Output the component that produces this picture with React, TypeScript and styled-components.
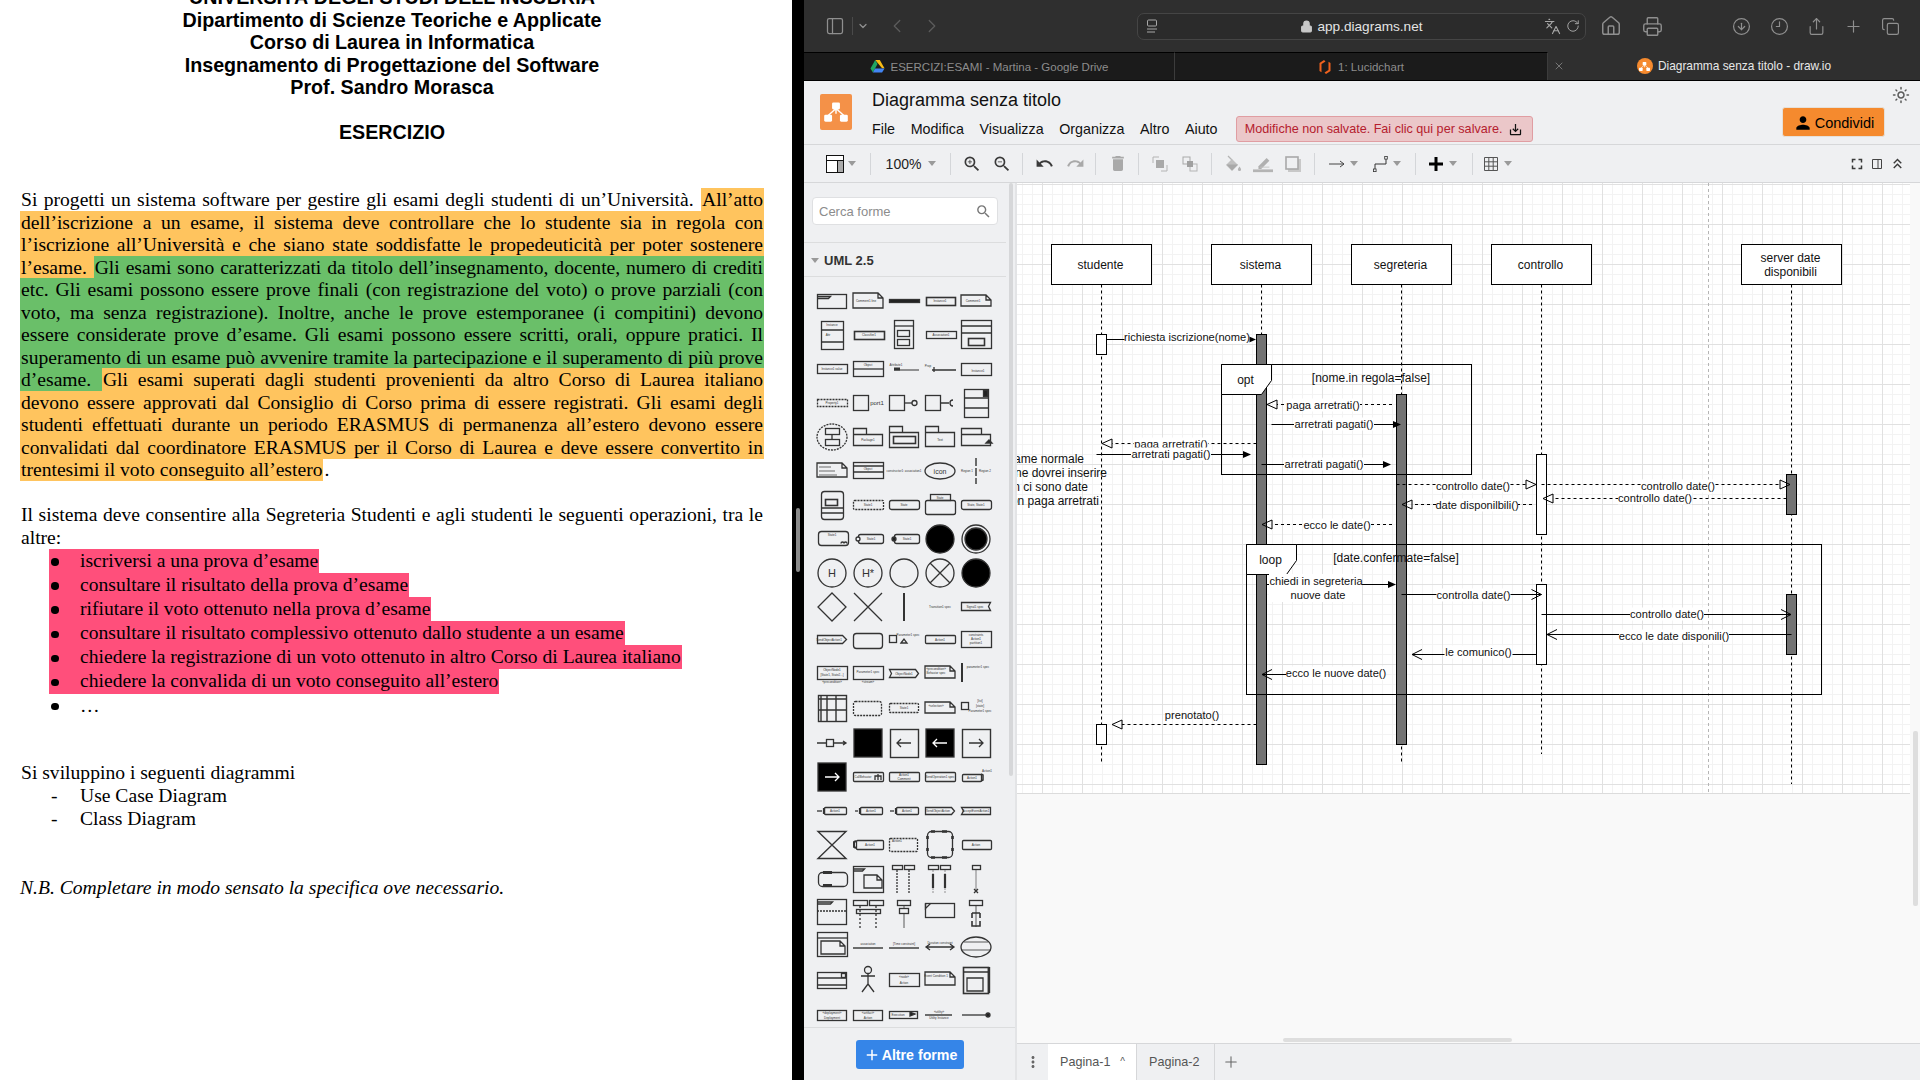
import React from "react";
import styled, { createGlobalStyle } from "styled-components";
import {
	ChevronDown,
	ChevronLeft,
	ChevronRight,
	CircleArrowDown,
	Clock9,
	Copy,
	House,
	Languages,
	Lock,
	PanelLeft,
	Plus,
	Printer,
	RotateCw,
	Share,
	X,
} from "lucide-react";
import {
	MdAdd,
	MdDelete,
	MdFullscreen,
	MdKeyboardDoubleArrowUp,
	MdMoreVert,
	MdOutlineLightMode,
	MdOutlineSaveAlt,
	MdPerson,
	MdRedo,
	MdSearch,
	MdUndo,
	MdZoomIn,
	MdZoomOut,
} from "react-icons/md";

const GlobalStyle = createGlobalStyle`
	html, body {
		margin: 0;
		padding: 0;
		background: #000;
	}
	* {
		box-sizing: border-box;
	}
`;

const Page = styled.div`
	display: flex;
	width: 1920px;
	height: 1080px;
	overflow: hidden;
	font-family: "Liberation Sans", Arial, sans-serif;
`;

/* ---------- PDF on the left ---------- */

const Doc = styled.div`
	width: 792px;
	height: 1080px;
	flex: none;
	overflow: hidden;
	background: #fff;
	color: #000;
	padding: 0 28px 0 20px;
	font-family: "Liberation Serif", "Times New Roman", serif;
	font-size: 19.6px;
	line-height: 22.5px;
`;

const DocHead = styled.header`
	margin-top: -14px;
	text-align: center;
	font-family: "Liberation Sans", Arial, sans-serif;
	font-weight: bold;
	font-size: 19.7px;
`;

const DocExercise = styled.div`
	margin-top: 22.5px;
`;

const Paragraph = styled.section<{ $top: number }>`
	margin-top: ${(p) => p.$top}px;
`;

const Line = styled.div<{ $last?: boolean }>`
	text-align: justify;
	text-align-last: ${(p) => (p.$last ? "left" : "justify")};
	white-space: nowrap;
`;

const TONES: Record<string, string> = {
	o: "#ffc45e",
	g: "#6abf69",
	p: "#ff4f7b",
	n: "transparent",
};

const Mark = styled.span<{ $tone: string }>`
	background: ${(p) => TONES[p.$tone]};
	padding: 1px;
`;

const Bullets = styled.ul`
	list-style: none;
	margin: 0 0 0 29px;
	padding: 0;
	line-height: 24.1px;
`;

const BulletRow = styled.li<{ $tone: string }>`
	display: flex;
	width: fit-content;
	background: ${(p) => TONES[p.$tone]};
	padding-right: 1px;
`;

const BulletMark = styled.span`
	width: 31px;
	flex: none;
	display: flex;
	align-items: center;
	padding: 2px 0 0 2px;
	&::before {
		content: "";
		width: 7.5px;
		height: 7.5px;
		border-radius: 50%;
		background: #000;
	}
`;

const DashList = styled.ul`
	list-style: none;
	margin: 1px 0 0 31px;
	padding: 0;
`;

const DashRow = styled.li`
	display: flex;
`;

const DashMark = styled.span`
	width: 29px;
`;

const ItalicLine = styled.div`
	margin-top: 47px;
	font-style: italic;
`;

const Gutter = styled.div`
	position: relative;
	width: 12px;
	flex: none;
	background: #000;
`;

const GutterHandle = styled.div`
	position: absolute;
	left: 4px;
	top: 508px;
	width: 4px;
	height: 64px;
	border-radius: 2px;
	background: #8a8a8a;
`;

const PARAGRAPH_ONE: [string, string][][] = [
	[["n", "Si progetti un sistema software per gestire gli esami degli studenti di un’Università. "], ["o", "All’atto"]],
	[["o", "dell’iscrizione a un esame, il sistema deve controllare che lo studente sia in regola con"]],
	[["o", "l’iscrizione all’Università e che siano state soddisfatte le propedeuticità per poter sostenere"]],
	[["o", "l’esame. "], ["g", "Gli esami sono caratterizzati da titolo dell’insegnamento, docente, numero di crediti"]],
	[["g", "etc. Gli esami possono essere prove finali (con registrazione del voto) o prove parziali (con"]],
	[["g", "voto, ma senza registrazione). Inoltre, anche le prove estemporanee (i compitini) devono"]],
	[["g", "essere considerate prove d’esame. Gli esami possono essere scritti, orali, oppure pratici. Il"]],
	[["g", "superamento di un esame può avvenire tramite la partecipazione e il superamento di più prove"]],
	[["g", "d’esame. "], ["o", "Gli esami superati dagli studenti provenienti da altro Corso di Laurea italiano"]],
	[["o", "devono essere approvati dal Consiglio di Corso prima di essere registrati. Gli esami degli"]],
	[["o", "studenti effettuati durante un periodo ERASMUS di permanenza all’estero devono essere"]],
	[["o", "convalidati dal coordinatore ERASMUS per il Corso di Laurea e deve essere convertito in"]],
	[["o", "trentesimi il voto conseguito all’estero"], ["n", "."]],
];

const OPERATIONS = [
	"iscriversi a una prova d’esame",
	"consultare il risultato della prova d’esame",
	"rifiutare il voto ottenuto nella prova d’esame",
	"consultare il risultato complessivo ottenuto dallo studente a un esame",
	"chiedere la registrazione di un voto ottenuto in altro Corso di Laurea italiano",
	"chiedere la convalida di un voto conseguito all’estero",
];

function Document() {
	return (
		<Doc>
			<DocHead>
				<div>UNIVERSITÀ DEGLI STUDI DELL’INSUBRIA</div>
				<div>Dipartimento di Scienze Teoriche e Applicate</div>
				<div>Corso di Laurea in Informatica</div>
				<div>Insegnamento di Progettazione del Software</div>
				<div>Prof. Sandro Morasca</div>
				<DocExercise>ESERCIZIO</DocExercise>
			</DocHead>
			<Paragraph $top={45.5}>
				{PARAGRAPH_ONE.map((segments, i) => (
					<Line key={i} $last={i === PARAGRAPH_ONE.length - 1}>
						{segments.map(([tone, text], j) => (
							<Mark key={j} $tone={tone}>
								{text}
							</Mark>
						))}
					</Line>
				))}
			</Paragraph>
			<Paragraph $top={22.5}>
				<Line>
					<Mark $tone="n">Il sistema deve consentire alla Segreteria Studenti e agli studenti le seguenti operazioni, tra le</Mark>
				</Line>
				<Line $last>
					<Mark $tone="n">altre:</Mark>
				</Line>
			</Paragraph>
			<Bullets>
				{OPERATIONS.map((text) => (
					<BulletRow key={text} $tone="p">
						<BulletMark />
						{text}
					</BulletRow>
				))}
				<BulletRow $tone="n">
					<BulletMark />…
				</BulletRow>
			</Bullets>
			<Paragraph $top={44}>
				<Line $last>
					<Mark $tone="n">Si sviluppino i seguenti diagrammi</Mark>
				</Line>
				<DashList>
					<DashRow>
						<DashMark>-</DashMark>Use Case Diagram
					</DashRow>
					<DashRow>
						<DashMark>-</DashMark>Class Diagram
					</DashRow>
				</DashList>
			</Paragraph>
			<ItalicLine>N.B. Completare in modo sensato la specifica ove necessario.</ItalicLine>
		</Doc>
	);
}

/* ---------- Safari chrome ---------- */

const Browser = styled.div`
	flex: 1;
	min-width: 0;
	height: 1080px;
	display: flex;
	flex-direction: column;
	background: #eff0f2;
`;

const ChromeBar = styled.div`
	height: 52px;
	flex: none;
	display: flex;
	align-items: center;
	padding-left: 21px;
	background: #2f2f2f;
`;

const ChromeSlot = styled.div<{ $w: number; $dim?: boolean }>`
	width: ${(p) => p.$w}px;
	flex: none;
	display: flex;
	justify-content: center;
	color: ${(p) => (p.$dim ? "#5c5c5c" : "#8f8f8f")};
`;

const ChromeDivider = styled.div`
	width: 1px;
	height: 18px;
	flex: none;
	margin-left: 7px;
	background: #4a4a4a;
`;

const AddressBar = styled.div`
	width: 449px;
	height: 27px;
	flex: none;
	margin-left: 194px;
	margin-right: 5px;
	display: flex;
	align-items: center;
	border: 1px solid #454545;
	border-radius: 7px;
	background: #2b2b2b;
	color: #e4e4e4;
	font-size: 13.6px;
`;

const ReaderIcon = styled.svg`
	margin-left: 8px;
	flex: none;
`;

const AddressText = styled.div`
	flex: 1;
	display: flex;
	justify-content: center;
	align-items: center;
	gap: 4px;
	padding-left: 21px;
`;

const AddressTools = styled.div`
	display: flex;
	align-items: center;
	gap: 5px;
	padding-right: 5px;
	color: #a8a8a8;
`;

const ChromeSpacer = styled.div<{ $w: number }>`
	width: ${(p) => p.$w}px;
	flex: none;
`;

const TabBar = styled.div`
	height: 29px;
	flex: none;
	display: flex;
	border-bottom: 1px solid #000;
	font-size: 11.5px;
`;

const InactiveTab = styled.div<{ $w: number }>`
	width: ${(p) => p.$w}px;
	flex: none;
	display: flex;
	align-items: center;
	justify-content: center;
	gap: 6px;
	background: #1b1b1b;
	border-top: 1px solid #000;
	border-right: 1px solid #3c3c3c;
	color: #8d8d8d;
`;

const ActiveTab = styled.div`
	flex: 1;
	display: grid;
	grid-template-columns: 22px 1fr 22px;
	align-items: center;
	background: #2f2f2f;
	color: #e8e8e8;
	font-size: 11.9px;
`;

const TabClose = styled.div`
	display: flex;
	justify-content: center;
	color: #777;
`;

const ActiveLabel = styled.div`
	display: flex;
	justify-content: center;
	align-items: center;
	gap: 5px;
`;

function DriveIcon() {
	return (
		<svg width="15" height="13" viewBox="0 0 14 13">
			<polygon points="4.7,0 9.3,0 14,8.2 11.6,8.2" fill="#f9bc15" />
			<polygon points="4.7,0 7,4 2.4,12.6 0,8.4" fill="#1fa463" />
			<polygon points="4.6,8.4 14,8.4 11.6,12.6 2.4,12.6" fill="#4285f4" />
		</svg>
	);
}

function LucidIcon() {
	return (
		<svg width="14" height="16" viewBox="0 0 14 16">
			<path d="M6 1 1.5 4v8l2 1.3V5l4-2.6z" fill="#f0621e" />
			<path d="M8 15l4.5-3V4l-2-1.3V11l-4 2.6z" fill="#f0621e" />
		</svg>
	);
}

function DrawioGlyph({ size }: { size: number }) {
	return (
		<svg width={size} height={size} viewBox="0 0 32 32">
			<rect x="11.5" y="5" width="9" height="8" rx="1.5" fill="#fff" />
			<rect x="2.5" y="19" width="9" height="8" rx="1.5" fill="#fff" />
			<rect x="20.5" y="19" width="9" height="8" rx="1.5" fill="#fff" />
			<path d="M16 12v6M16 12 7 20M16 12l9 8" stroke="#fff" strokeWidth="1.6" fill="none" />
		</svg>
	);
}

const FaviconDisc = styled.span`
	width: 16px;
	height: 16px;
	border-radius: 50%;
	background: #f58a2e;
	display: inline-flex;
	align-items: center;
	justify-content: center;
`;

function SafariChrome() {
	return (
		<>
			<ChromeBar>
				<ChromeSlot $w={20}>
					<PanelLeft size={20} strokeWidth={1.5} />
				</ChromeSlot>
				<ChromeDivider />
				<ChromeSlot $w={20}>
					<ChevronDown size={12} strokeWidth={2.5} />
				</ChromeSlot>
				<ChromeSlot $w={48} $dim>
					<ChevronLeft size={22} strokeWidth={1.4} />
				</ChromeSlot>
				<ChromeSlot $w={22} $dim>
					<ChevronRight size={22} strokeWidth={1.4} />
				</ChromeSlot>
				<AddressBar>
					<ReaderIcon width="12" height="14" viewBox="0 0 12 14">
						<rect x="1.5" y="1" width="9" height="6" rx="1" fill="none" stroke="#a8a8a8" />
						<path d="M1 10h10M1 13h8" stroke="#a8a8a8" />
					</ReaderIcon>
					<AddressText>
						<Lock size={13} fill="#c8c8c8" color="#c8c8c8" />
						app.diagrams.net
					</AddressText>
					<AddressTools>
						<Languages size={17} strokeWidth={1.6} />
						<RotateCw size={14} strokeWidth={1.6} />
					</AddressTools>
				</AddressBar>
				<ChromeSlot $w={40}>
					<House size={22} strokeWidth={1.6} />
				</ChromeSlot>
				<ChromeSlot $w={42}>
					<Printer size={21} strokeWidth={1.6} />
				</ChromeSlot>
				<ChromeSpacer $w={48} />
				<ChromeSlot $w={40}>
					<CircleArrowDown size={19} strokeWidth={1.5} />
				</ChromeSlot>
				<ChromeSlot $w={36}>
					<Clock9 size={19} strokeWidth={1.5} />
				</ChromeSlot>
				<ChromeSlot $w={38}>
					<Share size={19} strokeWidth={1.5} />
				</ChromeSlot>
				<ChromeSlot $w={36}>
					<Plus size={19} strokeWidth={1.5} />
				</ChromeSlot>
				<ChromeSlot $w={38}>
					<Copy size={19} strokeWidth={1.5} />
				</ChromeSlot>
			</ChromeBar>
			<TabBar>
				<InactiveTab $w={371}>
					<DriveIcon />
					ESERCIZI:ESAMI - Martina - Google Drive
				</InactiveTab>
				<InactiveTab $w={373}>
					<LucidIcon />
					1: Lucidchart
				</InactiveTab>
				<ActiveTab>
					<TabClose>
						<X size={12} />
					</TabClose>
					<ActiveLabel>
						<FaviconDisc>
							<DrawioGlyph size={13} />
						</FaviconDisc>
						Diagramma senza titolo - draw.io
					</ActiveLabel>
				</ActiveTab>
			</TabBar>
		</>
	);
}

/* ---------- draw.io header and toolbar ---------- */

const AppHeader = styled.div`
	height: 64px;
	flex: none;
	display: flex;
	padding-left: 16px;
	background: #eff0f2;
	border-bottom: 1px solid #d6d7d9;
`;

const Logo = styled.div`
	width: 32px;
	height: 36px;
	flex: none;
	margin-top: 13px;
	border-radius: 2px;
	background: #f49148;
	display: flex;
	align-items: center;
	justify-content: center;
`;

const HeaderCenter = styled.div`
	margin-left: 20px;
	padding-top: 8px;
`;

const DocTitle = styled.div`
	height: 22px;
	line-height: 22px;
	font-size: 18px;
	color: #111;
`;

const MenuRow = styled.div`
	margin-top: 5px;
	display: flex;
	align-items: center;
	gap: 15.6px;
	height: 26px;
	font-size: 14.3px;
	color: #111;
`;

const UnsavedBanner = styled.div`
	height: 26px;
	width: 297px;
	margin-left: 2.5px;
	display: flex;
	align-items: center;
	justify-content: center;
	gap: 6px;
	border: 1px solid #e09da2;
	border-radius: 3px;
	background: #ebc7c9;
	color: #b5202e;
	font-size: 12.6px;
`;

const BannerIcon = styled.span`
	display: flex;
	color: #111;
`;

const HeaderRight = styled.div`
	margin-left: auto;
	padding: 5px 10px 0 0;
	display: flex;
	flex-direction: column;
	align-items: flex-end;
`;

const SunSlot = styled.div`
	height: 18px;
	color: #5a5a5a;
`;

const ShareButton = styled.div`
	margin: 3px 25px 0 0;
	width: 103px;
	height: 30px;
	display: flex;
	align-items: center;
	justify-content: center;
	gap: 2px;
	padding-top: 1px;
	border-radius: 3px;
	border: 1px solid #e6e0d8;
	background: #f58a2e;
	color: #000;
	font-size: 14.5px;
`;

const Toolbar = styled.div`
	height: 38px;
	flex: none;
	display: flex;
	align-items: center;
	background: #eff0f2;
	border-bottom: 1px solid #d6d7d9;
`;

const ToolGroup = styled.div<{ $w?: number; $pad: number; $gap?: number }>`
	width: ${(p) => (p.$w ? `${p.$w}px` : "auto")};
	height: 22px;
	flex: none;
	display: flex;
	align-items: center;
	gap: ${(p) => p.$gap || 0}px;
	padding-left: ${(p) => p.$pad}px;
	border-right: ${(p) => (p.$w ? "1px solid #d4d6d9" : "0")};
`;

const ToolPair = styled.div`
	display: flex;
	align-items: center;
`;

const Tool = styled.div<{ $w?: number; $dim?: boolean }>`
	width: ${(p) => p.$w || 20}px;
	flex: none;
	display: flex;
	align-items: center;
	justify-content: center;
	color: ${(p) => (p.$dim ? "#a9a9a9" : "#3a3a3a")};
`;

const ZoomLabel = styled.div`
	width: 37px;
	text-align: center;
	font-size: 14px;
	color: #222;
`;

const Caret = styled.div`
	width: 0;
	height: 0;
	border-left: 4px solid transparent;
	border-right: 4px solid transparent;
	border-top: 5px solid #9a9a9a;
`;

const ToolbarRight = styled.div`
	margin-left: auto;
	padding-right: 13px;
	display: flex;
`;

function Caretted({ w = 14 }: { w?: number }) {
	return (
		<Tool $w={w}>
			<Caret />
		</Tool>
	);
}

function AppToolbar() {
	return (
		<Toolbar>
			<ToolGroup $w={67} $pad={22}>
				<Tool $w={18}>
					<svg width="18" height="18" viewBox="0 0 18 18">
						<rect x="0.5" y="0.5" width="17" height="17" fill="#fff" stroke="#111" />
						<path d="M0.5 5.5h17M11.5 5.5v12" stroke="#111" fill="none" />
						<rect x="12" y="6" width="5" height="11" fill="#aaa" />
					</svg>
				</Tool>
				<Caretted w={16} />
			</ToolGroup>
			<ToolGroup $w={80} $pad={14}>
				<ZoomLabel>100%</ZoomLabel>
				<Caretted w={20} />
			</ToolGroup>
			<ToolGroup $w={72} $pad={11} $gap={10}>
				<Tool>
					<MdZoomIn size={20} />
				</Tool>
				<Tool>
					<MdZoomOut size={20} />
				</Tool>
			</ToolGroup>
			<ToolGroup $w={73} $pad={11} $gap={11}>
				<Tool>
					<MdUndo size={19} />
				</Tool>
				<Tool $dim>
					<MdRedo size={19} />
				</Tool>
			</ToolGroup>
			<ToolGroup $w={43} $pad={12}>
				<Tool $dim>
					<MdDelete size={21} />
				</Tool>
			</ToolGroup>
			<ToolGroup $w={73} $pad={11} $gap={10}>
				<Tool $dim>
					<svg width="16" height="16" viewBox="0 0 16 16">
						<path d="M1 7V1h6M15 9v6H9" fill="none" stroke="#b4b4b4" />
						<rect x="4" y="4" width="8" height="8" fill="#a9a9a9" />
					</svg>
				</Tool>
				<Tool $dim>
					<svg width="16" height="16" viewBox="0 0 16 16">
						<rect x="1" y="1" width="7" height="7" fill="none" stroke="#a9a9a9" />
						<rect x="8" y="8" width="7" height="7" fill="none" stroke="#b4b4b4" />
						<rect x="5" y="5" width="6" height="6" fill="#a0a0a0" />
					</svg>
				</Tool>
			</ToolGroup>
			<ToolGroup $w={103} $pad={11} $gap={10}>
				<Tool $dim>
					<svg width="18" height="18" viewBox="0 0 18 18">
						<path d="M4 1l4 4" stroke="#b4b4b4" strokeWidth="1.2" />
						<path d="M8 4l6 6-6 6-6-6z" fill="#c0c0c0" />
						<path d="M2.5 9.5h11.5L8 15.5z" fill="#a9a9a9" />
						<path d="M15.5 11.5c1 1.4 1.6 2.2 1.6 3a1.6 1.6 0 0 1-3.2 0c0-.8.6-1.6 1.6-3z" fill="#b4b4b4" />
					</svg>
				</Tool>
				<Tool $dim>
					<svg width="22" height="19" viewBox="0 0 22 19">
						<path d="M6 12.5 15 3.5l3 3-9 9H6z" fill="#b0b0b0" />
						<path d="M8 13.5h10" stroke="#c4c4c4" />
						<rect x="0" y="16" width="22" height="3" fill="#b4b4b4" />
					</svg>
				</Tool>
				<Tool $dim>
					<svg width="16" height="16" viewBox="0 0 16 16">
						<rect x="3" y="3" width="13" height="13" fill="#c8c8c8" />
						<rect x="1" y="1" width="12" height="12" fill="#eff0f2" stroke="#a9a9a9" strokeWidth="1.6" />
					</svg>
				</Tool>
			</ToolGroup>
			<ToolGroup $w={101} $pad={12} $gap={9}>
				<ToolPair>
					<Tool>
						<svg width="16" height="8" viewBox="0 0 16 8">
							<path d="M0 4h15M11 1l4 3-4 3" fill="none" stroke="#444" />
						</svg>
					</Tool>
					<Caretted />
				</ToolPair>
				<ToolPair>
					<Tool>
						<svg width="15" height="16" viewBox="0 0 15 16">
							<path d="M2 13V8h11V3" fill="none" stroke="#333" />
							<rect x="0.5" y="13" width="2.6" height="2.6" fill="#eff0f2" stroke="#333" strokeWidth="0.8" />
							<rect x="11.7" y="0.5" width="2.6" height="2.6" fill="#eff0f2" stroke="#333" strokeWidth="0.8" />
						</svg>
					</Tool>
					<Caretted />
				</ToolPair>
			</ToolGroup>
			<ToolGroup $w={57} $pad={10}>
				<Tool>
					<svg width="14" height="14" viewBox="0 0 14 14">
						<path d="M7 0v14M0 7h14" stroke="#000" strokeWidth="3" />
					</svg>
				</Tool>
				<Caretted />
			</ToolGroup>
			<ToolGroup $pad={8}>
				<Tool>
					<svg width="14" height="14" viewBox="0 0 14 14">
						<path d="M.5.5h13v13H.5zM.5 4.8h13M.5 9.2h13M4.8.5v13M9.2.5v13" fill="none" stroke="#555" />
					</svg>
				</Tool>
				<Caretted />
			</ToolGroup>
			<ToolbarRight>
				<Tool>
					<MdFullscreen size={18} />
				</Tool>
				<Tool>
					<svg width="12" height="12" viewBox="0 0 12 12">
						<path d="M1.5 1.5h9v9h-9zM7 1.5v9" fill="none" stroke="#444" />
					</svg>
				</Tool>
				<Tool>
					<MdKeyboardDoubleArrowUp size={17} />
				</Tool>
			</ToolbarRight>
		</Toolbar>
	);
}

/* ---------- shape palette ---------- */

const Body = styled.div`
	flex: 1;
	min-height: 0;
	display: flex;
`;

const Sidebar = styled.aside`
	position: relative;
	width: 213px;
	flex: none;
	display: flex;
	flex-direction: column;
	background: #eff0f2;
	border-right: 2px solid #e3e4e6;
`;

const SideThumb = styled.div`
	position: absolute;
	left: 205px;
	top: 0;
	width: 4px;
	height: 593px;
	border-radius: 2px;
	background: #d6d7d9;
`;

const SearchBox = styled.div`
	margin: 14px 0 17px 8px;
	width: 186px;
	height: 28px;
	flex: none;
	display: flex;
	align-items: center;
	justify-content: space-between;
	padding: 0 5px 0 6px;
	border: 1px solid #dfe0e2;
	border-radius: 4px;
	background: #fff;
	color: #8c8c8c;
	font-size: 13px;
`;

const SectionHead = styled.div`
	width: 202px;
	height: 35px;
	flex: none;
	display: flex;
	align-items: center;
	gap: 5px;
	padding: 1px 0 0 7px;
	border-top: 1px solid #dcddde;
	border-bottom: 1px solid #dcddde;
	font-size: 13px;
	font-weight: bold;
	color: #333;
`;

const SmallCaret = styled.div`
	width: 0;
	height: 0;
	border-left: 4px solid transparent;
	border-right: 4px solid transparent;
	border-top: 5px solid #999;
`;

const PaletteScroll = styled.div`
	flex: 1;
	min-height: 0;
	overflow: hidden;
	padding: 7px 0 0 10px;
`;

const PaletteGrid = styled.div`
	display: grid;
	grid-template-columns: repeat(5, 36px);
	grid-auto-rows: 34px;
`;

const Cell = styled.svg`
	width: 36px;
	height: 34px;
	fill: none;
	stroke: #333;
	stroke-width: 1.3;
`;

const Tiny = styled.text<{ $size?: number }>`
	font-family: "Liberation Sans", Arial, sans-serif;
	font-size: ${(p) => p.$size || 3}px;
	fill: #333;
	stroke: none;
	text-anchor: middle;
`;

const SideFooter = styled.div`
	height: 53px;
	flex: none;
	display: flex;
	align-items: center;
	justify-content: center;
	padding: 0 0 0 1px;
	border-top: 1px solid #dcddde;
`;

const MoreShapes = styled.div`
	width: 108px;
	height: 29px;
	display: flex;
	align-items: center;
	justify-content: center;
	gap: 1px;
	padding-top: 1px;
	border-radius: 3px;
	background: #3585e8;
	color: #fff;
	font-size: 14.2px;
	font-weight: bold;
`;

const note = (x: number, y: number, w: number, h: number) =>
	`M${x} ${y}h${w - 5}l5 5v${h - 5}h-${w}zM${x + w - 5} ${y}v5h5`;

const Box = (p: { x: number; y: number; w: number; h: number; r?: number; f?: string; d?: boolean; s?: number }) => (
	<rect
		x={p.x + 0.5}
		y={p.y + 0.5}
		width={p.w}
		height={p.h}
		rx={p.r || 0}
		fill={p.f || "none"}
		strokeDasharray={p.d ? "2 1" : undefined}
		strokeWidth={p.s}
	/>
);

const Lc = (p: { d: string; f?: string; s?: number; da?: string }) => (
	<path d={p.d} fill={p.f || "none"} strokeWidth={p.s} strokeDasharray={p.da} />
);

const Ci = (p: { y?: number; r?: number; f?: string }) => <circle cx={18} cy={p.y || 17} r={p.r || 14} fill={p.f || "none"} />;

const PALETTE: React.ReactNode[] = [
	/* row 1 */
	<><Box x={3} y={10} w={29} h={14} /><Lc d="M3.5 12.5h13l-2 2H3.5" /></>,
	<><Lc d={note(3, 9, 30, 15)} /><Tiny x={16} y={18}>Comment1 line</Tiny></>,
	<Box x={3} y={15} w={30} h={3} f="#222" />,
	<><Box x={4} y={13} w={29} h={8} s={1.6} /><Tiny x={18} y={18}>Instance1</Tiny></>,
	<><Lc d={note(3, 11, 30, 11)} /><Tiny x={15} y={18}>Comment1</Tiny></>,
	/* row 2 */
	<><Box x={7} y={3} w={22} h={28} /><Lc d="M7 12h22M7 24h22" /><Tiny x={18} y={8}>Instance</Tiny><Tiny x={14} y={18}>Attr</Tiny></>,
	<><Box x={4} y={13} w={30} h={8} s={1.6} /><Tiny x={19} y={18}>Classifier1</Tiny></>,
	<><Box x={8} y={2} w={19} h={28} /><Box x={11} y={12} w={12} h={6} /><Box x={11} y={21} w={12} h={6} /><Lc d="M8 8h19" /></>,
	<><Box x={4} y={13} w={30} h={7} /><Tiny x={19} y={18}>Association1</Tiny></>,
	<><Box x={3} y={2} w={30} h={28} /><Lc d="M3 8h30M3 15h30" /><Box x={10} y={20} w={16} h={7} s={1.6} /></>,
	/* row 3 */
	<><Box x={3} y={12} w={30} h={9} /><Tiny x={18} y={18}>Instance1 value</Tiny></>,
	<><Box x={3} y={9} w={30} h={15} /><Lc d="M3 17h30" /><Tiny x={18} y={14}>Object</Tiny></>,
	<><Lc d="M8 18h25" s={1} /><Lc d="M8 17h6" s={3} /><Tiny x={10} y={14}>Attribute1</Tiny></>,
	<><Lc d="M10 18h24M12 15v5" /><Tiny x={6} y={15}>Prop</Tiny></>,
	<><Box x={3} y={11} w={30} h={12} /><Tiny x={20} y={20}>Instance1</Tiny></>,
	/* row 4 */
	<><Box x={3} y={13} w={30} h={7} d /><Tiny x={18} y={18}>Property1</Tiny></>,
	<><Box x={3} y={9} w={15} h={15} /><Tiny x={27} y={19} $size={6}>port1</Tiny></>,
	<><Box x={3} y={9} w={15} h={15} /><Lc d="M18 17h8" /><circle cx={28.5} cy={17} r={2.5} /></>,
	<><Box x={3} y={9} w={15} h={15} /><Lc d="M18 17h9M31 14a3 3 0 0 0 0 6" /></>,
	<><Box x={6} y={3} w={24} h={28} /><Lc d="M6 12h24M6 22h24" /><Box x={25} y={4} w={4} h={6} f="#222" /></>,
	/* row 5 */
	<><ellipse cx={18} cy={17} rx={15} ry={13} strokeDasharray="2 1" /><Box x={11} y={8} w={14} h={6} /><Box x={11} y={19} w={14} h={6} /><Lc d="M18 14v5" /></>,
	<><Lc d="M3.5 8.5h13v6h16v11h-29z M3.5 14.5h13" /><Tiny x={18} y={21}>Package1</Tiny></>,
	<><Lc d="M3.5 6.5h13v6h16v15h-29z M3.5 12.5h29" /><Box x={7} y={16} w={22} h={7} s={1.6} /></>,
	<><Lc d="M3.5 6.5h13v6h16v14h-29z M3.5 12.5h13" /><Tiny x={18} y={21}>Text</Tiny></>,
	<><Lc d="M3.5 8.5h20v6h9v11h-29z M3.5 14.5h20" /><Lc d="M28 23l3-3 3 3z" f="#222" /></>,
	/* row 6 */
	<><Lc d={note(3, 9, 30, 14)} /><Lc d="M5 13h12M5 17h16M5 21h18" s={0.7} /></>,
	<><Box x={3} y={8} w={30} h={16} /><Lc d="M3 12h30M3 18h30" /><Tiny x={18} y={16}>Object</Tiny></>,
	<Tiny x={18} y={18}>constructor1: association1</Tiny>,
	<><ellipse cx={18} cy={17} rx={15} ry={8} /><Tiny x={18} y={20} $size={7}>icon</Tiny></>,
	<><Lc d="M18 4v8M18 14v8M18 24v6" s={1.4} /><Tiny x={9} y={18}>Region 1</Tiny><Tiny x={27} y={18}>Region 2</Tiny></>,
	/* row 7 */
	<><Box x={7} y={3} w={22} h={28} r={3} /><Box x={11} y={11} w={12} h={6} s={1.6} /><Lc d="M7 20h22M7 25h22" /></>,
	<><Box x={3} y={12} w={30} h={9} r={1} d /><Tiny x={18} y={18}>State1</Tiny></>,
	<><Box x={3} y={12} w={30} h={9} r={2} /><Tiny x={18} y={18}>State</Tiny></>,
	<><Box x={3} y={12} w={30} h={14} r={2} /><Box x={8} y={6} w={20} h={6} /><Tiny x={18} y={11}>State</Tiny></>,
	<><Box x={3} y={12} w={30} h={9} r={2} /><Tiny x={18} y={18}>State, State1</Tiny></>,
	/* row 8 */
	<><Box x={4} y={9} w={30} h={14} r={3} /><Lc d="M27 21.5a1.5 1.5 0 1 1 3 0a1.5 1.5 0 1 1 3 0" s={1.4} /><Tiny x={18} y={14}>State1</Tiny></>,
	<><Box x={8} y={12} w={25} h={9} r={2} /><circle cx={8} cy={17} r={2} fill="#eff0f2" /><Tiny x={21} y={18}>State1</Tiny></>,
	<><Box x={8} y={12} w={25} h={9} r={2} /><circle cx={8} cy={17} r={2} fill="#222" /><Tiny x={21} y={18}>State1</Tiny></>,
	<Ci f="#000" />,
	<><Ci r={14} /><Ci r={11} f="#000" /></>,
	/* row 9 */
	<><Ci /><Tiny x={18} y={21} $size={11}>H</Tiny></>,
	<><Ci /><Tiny x={18} y={21} $size={11}>H*</Tiny></>,
	<Ci />,
	<><Ci /><Lc d="M8 7l20 20M28 7 8 27" /></>,
	<Ci f="#000" />,
	/* row 10 */
	<Lc d="M18 3 32 17 18 31 4 17z" />,
	<Lc d="M4 3l28 28M32 3 4 31" />,
	<Lc d="M18 3v28" s={2} />,
	<Tiny x={18} y={18}>Transition1 spec</Tiny>,
	<><Lc d="M3.5 12.5h29l-2 4 2 4h-29z" /><Tiny x={17} y={18}>Signal1 spec</Tiny></>,
	/* row 11 */
	<><Lc d="M3.5 11.5h25l4 4-4 4h-25z" /><Tiny x={15} y={17}>SendObjectAction1</Tiny></>,
	<Box x={3} y={9} w={29} h={15} r={3} />,
	<><Box x={3} y={11} w={7} h={7} /><Lc d="M15 19l3-4 3 4z" /><Tiny x={22} y={12}>Parameter1 spec</Tiny></>,
	<><Box x={3} y={11} w={30} h={8} r={1} /><Tiny x={18} y={17}>Action1</Tiny></>,
	<><Box x={3} y={7} w={30} h={16} /><Tiny x={18} y={12}>constraints</Tiny><Tiny x={18} y={16}>Action1</Tiny><Tiny x={18} y={20}>partition1</Tiny></>,
	/* row 12 */
	<><Box x={3} y={8} w={30} h={13} /><Tiny x={18} y={13}>ObjectNode1</Tiny><Tiny x={18} y={18}>[State1, State2...]</Tiny><Tiny x={18} y={25}>{"«precondition»"}</Tiny></>,
	<><Box x={3} y={8} w={30} h={13} /><Tiny x={18} y={15}>Parameter1 spec</Tiny><Tiny x={18} y={25}>«stream»</Tiny></>,
	<><Lc d="M3.5 11.5h26l3 4-3 4h-26l2-4z" /><Tiny x={18} y={17}>ObjectNode1</Tiny></>,
	<><Lc d={note(3, 8, 30, 12)} /><Tiny x={14} y={12}>«precondition»</Tiny><Tiny x={14} y={16}>Behavior spec</Tiny></>,
	<><Lc d="M4 5v19" s={2} /><Tiny x={20} y={10}>parameter1 spec</Tiny></>,
	/* row 13 */
	<><Box x={4} y={3} w={28} h={26} s={1.4} /><Lc d="M4 7h28M4 18h28M13 3v26M22 3v26M7 3v26" s={1.4} /></>,
	<Box x={3} y={9} w={28} h={14} r={2} d />,
	<><Box x={3} y={11} w={29} h={9} r={1} d /><Tiny x={18} y={17}>State1</Tiny></>,
	<><Lc d={note(3, 10, 30, 11)} /><Tiny x={14} y={15}>«selection»</Tiny></>,
	<><Box x={3} y={10} w={7} h={7} /><Tiny x={22} y={10}>[list]</Tiny><Tiny x={22} y={15}>[state]</Tiny><Tiny x={22} y={20}>Parameter1 spec</Tiny></>,
	/* row 14 */
	<><Box x={12} y={13} w={7} h={7} /><Lc d="M3 17h9M19 17h13M29 15l3 2-3 2" /></>,
	<rect x={4} y={3} width={28} height={28} fill="#000" />,
	<><Box x={4} y={3} w={28} h={28} s={1.4} /><Lc d="M11 17h14M15 13l-4 4 4 4" /></>,
	<><rect x={4} y={3} width={28} height={28} fill="#000" /><path d="M11 17h14M15 13l-4 4 4 4" stroke="#fff" /></>,
	<><Box x={4} y={3} w={28} h={28} s={1.4} /><Lc d="M11 17h14M21 13l4 4-4 4" /></>,
	/* row 15 */
	<><rect x={4} y={3} width={28} height={28} fill="#000" /><path d="M11 17h14M21 13l4 4-4 4" stroke="#fff" /></>,
	<><Box x={3} y={12} w={30} h={9} r={1} /><Lc d="M25 20v-4h6v4M28 14v6" /><Tiny x={13} y={18}>CallBehavior</Tiny></>,
	<><Box x={3} y={12} w={30} h={9} r={1} /><Tiny x={18} y={16}>Action1</Tiny><Tiny x={18} y={20}>Comment</Tiny></>,
	<><Box x={3} y={12} w={30} h={9} r={1} /><Tiny x={18} y={18}>SendOperation1 spec</Tiny></>,
	<><Box x={4} y={14} w={19} h={7} r={1} /><Lc d="M23 14l2 1v5l-2 1" s={1.5} /><Tiny x={14} y={19}>Action1</Tiny><Tiny x={29} y={12}>Action1</Tiny></>,
	/* row 16 */
	<><Box x={10} y={13} w={22} h={7} r={1} /><Lc d="M3 17h5" /><Lc d="M10 14v6" s={2.2} /><Tiny x={21} y={18}>Action1</Tiny></>,
	<><Box x={10} y={13} w={22} h={7} r={1} /><Lc d="M5 17h3" /><Lc d="M10 14v6" s={2.2} /><Tiny x={21} y={18}>Action1</Tiny></>,
	<><Box x={10} y={13} w={22} h={7} r={1} /><Lc d="M4 17h4" /><Lc d="M10 14v6" s={2.2} /><Tiny x={21} y={18}>Action1</Tiny></>,
	<><Lc d="M3.5 13.5h26l3 3.5-3 3.5h-26z" /><Tiny x={16} y={18}>SendObjectAction</Tiny></>,
	<><Lc d="M3.5 13.5h29v7h-29l2-3.5z" /><Tiny x={18} y={18}>AcceptEventAction1</Tiny></>,
	/* row 17 */
	<Lc d="M4 3.5h28L4 30.5h28z" s={1.4} />,
	<><Box x={6} y={12} w={27} h={9} r={1} /><Lc d="M6 13l-2 1v5l2 1" s={2} /><Tiny x={20} y={18}>Action1</Tiny></>,
	<><Box x={3} y={10} w={28} h={13} r={1} d /><Tiny x={11} y={14}>Action1</Tiny></>,
	<><Box x={5} y={3} w={25} h={26} r={4} /><Lc d="M9 3.5h4M20 3.5h5M9 29.5h4M20 29.5h5M5.5 8v3M5.5 20v3M30.5 8v3M30.5 20v3" s={2.6} /></>,
	<><Box x={4} y={12} w={29} h={9} r={1} /><Tiny x={18} y={18}>Action</Tiny></>,
	/* row 18 */
	<><Box x={4} y={10} w={29} h={14} r={4} /><Lc d="M9 10.5h9M9 23.5h9" s={3} /></>,
	<><Box x={3} y={4} w={30} h={26} /><Lc d={note(14, 13, 18, 13)} /><Lc d="M3.5 7h11l-2 2h-9" /></>,
	<><Box x={6} y={3} w={10} h={4} /><Box x={18} y={3} w={10} h={4} /><Lc d="M11 8v24M23 8v24" da="2 1" /></>,
	<><Box x={6} y={3} w={10} h={4} /><Box x={18} y={3} w={10} h={4} /><Lc d="M11 12v14M23 12v14" s={2.2} /><Lc d="M11 8v24M23 8v24" s={0.5} da="2 1" /></>,
	<><Box x={14} y={3} w={8} h={4} /><Lc d="M18 8v20" s={0.6} /><Lc d="M16 27l4 4M20 27l-4 4" s={1.3} /></>,
	/* row 19 */
	<><Box x={3} y={3} w={29} h={25} /><Lc d="M3.5 6h15l-2 2h-13" /><Lc d="M3 15h29" da="2 1" s={1.5} /></>,
	<><Box x={3} y={4} w={14} h={5} /><Box x={19} y={4} w={14} h={5} /><Box x={6} y={13} w={24} h={4} /><Lc d="M10 10v22M26 10v22" da="2 2" /></>,
	<><Box x={11} y={4} w={13} h={5} /><Box x={13} y={12} w={9} h={5} /><Lc d="M18 10v2M18 17v15" s={0.8} /></>,
	<><Box x={3} y={7} w={29} h={14} /><Lc d="M3.5 7.5v5l5-5" /></>,
	<><Box x={11} y={4} w={13} h={5} /><Lc d="M18 9v22" s={0.8} /><Lc d="M14 17h8M14 17v5M22 17v5M14 25v5h8v-5" s={1.6} /></>,
	/* row 20 */
	<><Box x={3} y={2} w={30} h={24} /><Lc d="M3 8h30" /><Lc d={note(7, 11, 24, 13)} /></>,
	<><Lc d="M3 18h30" s={1.4} /><Tiny x={18} y={15}>association</Tiny></>,
	<><Lc d="M3 18h30" s={1.4} /><Tiny x={18} y={15}>[Time constraint]</Tiny></>,
	<><Lc d="M5 17h26M8 14l-4 3 4 3M28 14l4 3-4 3" /><Tiny x={18} y={14}>Duration constraint</Tiny></>,
	<><ellipse cx={18} cy={17} rx={15} ry={10} /><Lc d="M6 12h24M3 20h30" s={0.8} /></>,
	/* row 21 */
	<><Box x={3} y={8} w={29} h={16} /><Lc d="M3 14h29M3 21h29" /><Box x={27} y={9} w={4} h={4} /></>,
	<><circle cx={18} cy={6} r={3.5} /><Lc d="M18 10v10M11 12h14M18 20l-6 8M18 20l6 8" /></>,
	<><Box x={3} y={9} w={30} h={13} /><Tiny x={18} y={14}>«node»</Tiny><Tiny x={18} y={20}>Action</Tiny></>,
	<><Lc d={note(3, 8, 30, 13)} /><Tiny x={14} y={13}>Event Condition 1</Tiny></>,
	<><Box x={5} y={3} w={25} h={26} s={1.6} /><Lc d="M5.5 8h25M9 14h16v13H9z" /><Lc d="M31 3v26" s={2.4} /></>,
	/* row 22 */
	<><Box x={3} y={12} w={29} h={10} /><Tiny x={18} y={16}>«deployment»</Tiny><Tiny x={18} y={21}>Deployment</Tiny></>,
	<><Box x={3} y={12} w={29} h={10} /><Tiny x={18} y={16}>«artifact»</Tiny><Tiny x={18} y={21}>Action</Tiny></>,
	<><Box x={3} y={13} w={28} h={7} /><Lc d="M24 14l5 2-5 2z" f="#222" /><Tiny x={12} y={18}>Execution</Tiny></>,
	<><Lc d="M3 17h27" s={1.4} /><Tiny x={17} y={15}>«utility»</Tiny><Tiny x={17} y={21}>Utility Instance</Tiny></>,
	<><Lc d="M4 17h24" /><circle cx={30} cy={17} r={2} fill="#222" /></>,
];

function Palette() {
	return (
		<Sidebar>
			<SideThumb />
			<SearchBox>
				Cerca forme
				<MdSearch size={17} color="#777" />
			</SearchBox>
			<SectionHead>
				<SmallCaret />
				UML 2.5
			</SectionHead>
			<PaletteScroll>
				<PaletteGrid>
					{PALETTE.map((shape, i) => (
						<Cell key={i} viewBox="0 0 36 34">
							{shape}
						</Cell>
					))}
				</PaletteGrid>
			</PaletteScroll>
			<SideFooter>
				<MoreShapes>
					<MdAdd size={18} />
					Altre forme
				</MoreShapes>
			</SideFooter>
		</Sidebar>
	);
}

/* ---------- sequence diagram ---------- */

const Main = styled.main`
	flex: 1;
	min-width: 0;
	display: flex;
	flex-direction: column;
`;

const CanvasArea = styled.div`
	position: relative;
	flex: 1;
	min-height: 0;
	overflow: hidden;
	background: #f9f9f9;
`;

const GridPage = styled.div`
	width: 893px;
	height: 611px;
	overflow: hidden;
	background-color: #fff;
	background-image: linear-gradient(to right, #e1e1e1 1px, transparent 1px),
		linear-gradient(to bottom, #e1e1e1 1px, transparent 1px),
		linear-gradient(to right, #f3f3f3 1px, transparent 1px),
		linear-gradient(to bottom, #f3f3f3 1px, transparent 1px);
	background-size: 40px 40px, 40px 40px, 10px 10px, 10px 10px;
	background-position: 25px 0, 0 1px, 5px 0, 0 1px;
	border-bottom: 1px solid #dcdcdc;
`;

const DiagramSvg = styled.svg`
	display: block;
	width: 893px;
	height: 611px;
`;

const DiagramText = styled.text<{ $size?: number; $end?: boolean }>`
	font-family: "Liberation Sans", Arial, sans-serif;
	font-size: ${(p) => p.$size || 11.1}px;
	fill: #111;
	text-anchor: ${(p) => (p.$end ? "end" : "middle")};
	dominant-baseline: central;
`;

const HScroll = styled.div`
	position: absolute;
	left: 266px;
	bottom: 1px;
	width: 229px;
	height: 4px;
	border-radius: 2px;
	background: #dedede;
`;

const VScroll = styled.div`
	position: absolute;
	right: 2px;
	top: 548px;
	width: 5px;
	height: 175px;
	border-radius: 2px;
	background: #dedede;
`;

const ACTORS = [
	{ x: 1051.5, life: 762, lines: ["studente"] },
	{ x: 1211.5, life: 764, lines: ["sistema"] },
	{ x: 1351.5, life: 762, lines: ["segreteria"] },
	{ x: 1491.5, life: 754, lines: ["controllo"] },
	{ x: 1741.5, life: 784, lines: ["server date", "disponibili"] },
];

const BARS = [
	{ x: 1096.5, y: 334.5, h: 20, fill: "#fff" },
	{ x: 1096.5, y: 724.5, h: 20, fill: "#fff" },
	{ x: 1256.5, y: 334.5, h: 430, fill: "#737373" },
	{ x: 1396.5, y: 394.5, h: 350, fill: "#737373" },
	{ x: 1536.5, y: 454.5, h: 80, fill: "#fff" },
	{ x: 1536.5, y: 584.5, h: 80, fill: "#fff" },
	{ x: 1786.5, y: 474.5, h: 40, fill: "#737373" },
	{ x: 1786.5, y: 594.5, h: 60, fill: "#737373" },
];

type Message = {
	from: number;
	to: number;
	y: number;
	head: "block" | "open" | "chevron";
	dashed?: boolean;
	text: string;
	lx: number;
	ly: number;
	lw: number;
};

const MESSAGES: Message[] = [
	{ from: 1106.5, to: 1256, y: 339.5, head: "block", text: "richiesta iscrizione(nome)", lx: 1187, ly: 337, lw: 125 },
	{ from: 1392, to: 1267, y: 404.5, head: "open", dashed: true, text: "paga arretrati()", lx: 1323, ly: 405, lw: 74 },
	{ from: 1271.5, to: 1401, y: 424.5, head: "block", text: "arretrati pagati()", lx: 1334, ly: 424, lw: 80 },
	{ from: 1256.5, to: 1102, y: 443.5, head: "open", dashed: true, text: "paga arretrati()", lx: 1171, ly: 444, lw: 74 },
	{ from: 1096.5, to: 1251, y: 454.5, head: "block", text: "arretrati pagati()", lx: 1171, ly: 454, lw: 80 },
	{ from: 1261.5, to: 1391, y: 464.5, head: "block", text: "arretrati pagati()", lx: 1324, ly: 464, lw: 80 },
	{ from: 1396.5, to: 1536, y: 484.5, head: "open", dashed: true, text: "controllo date()", lx: 1473, ly: 486, lw: 74 },
	{ from: 1532, to: 1402, y: 504.5, head: "open", dashed: true, text: "date disponilbili()", lx: 1477, ly: 505, lw: 82 },
	{ from: 1541.5, to: 1790, y: 484.5, head: "open", dashed: true, text: "controllo date()", lx: 1678, ly: 486, lw: 74 },
	{ from: 1786.5, to: 1543, y: 498.5, head: "open", dashed: true, text: "controllo date()", lx: 1655, ly: 498, lw: 74 },
	{ from: 1392, to: 1262, y: 524.5, head: "open", dashed: true, text: "ecco le date()", lx: 1337, ly: 525, lw: 68 },
	{ from: 1401.5, to: 1541.5, y: 594.5, head: "chevron", text: "controlla date()", lx: 1473.5, ly: 595, lw: 74 },
	{ from: 1541.5, to: 1791, y: 614.5, head: "chevron", text: "controllo date()", lx: 1667, ly: 614, lw: 74 },
	{ from: 1791.5, to: 1547, y: 634.5, head: "chevron", text: "ecco le date disponili()", lx: 1674, ly: 636, lw: 110 },
	{ from: 1536.5, to: 1412, y: 654.5, head: "chevron", text: "le comunico()", lx: 1478.5, ly: 652, lw: 68 },
	{ from: 1385, to: 1262, y: 674.5, head: "chevron", text: "ecco le nuove date()", lx: 1336, ly: 673, lw: 100 },
	{ from: 1256.5, to: 1112, y: 724.5, head: "open", dashed: true, text: "prenotato()", lx: 1192, ly: 715, lw: 54 },
];

const NOTE_LINES = [
	{ text: "ame normale", x: 1084, y: 459 },
	{ text: "ne dovrei inserire", x: 1107, y: 473 },
	{ text: "n ci sono date", x: 1088, y: 487 },
	{ text: "on paga arretrati", x: 1099, y: 501 },
];

function ArrowHead({ m }: { m: Message }) {
	const dir = m.to > m.from ? 1 : -1;
	if (m.head === "block") {
		return <polygon points={`${m.to},${m.y} ${m.to - dir * 8},${m.y - 3.5} ${m.to - dir * 8},${m.y + 3.5}`} fill="#000" />;
	}
	if (m.head === "open") {
		return (
			<polygon
				points={`${m.to},${m.y} ${m.to - dir * 10},${m.y - 4.5} ${m.to - dir * 10},${m.y + 4.5}`}
				fill="none"
				stroke="#000"
			/>
		);
	}
	return (
		<polyline
			points={`${m.to - dir * 10},${m.y - 5} ${m.to},${m.y} ${m.to - dir * 10},${m.y + 5}`}
			fill="none"
			stroke="#000"
		/>
	);
}

function MessageArrow({ m }: { m: Message }) {
	const dir = m.to > m.from ? 1 : -1;
	const lineEnd = m.head === "chevron" ? m.to : m.to - dir * (m.head === "open" ? 10 : 8);
	return (
		<g>
			<line x1={m.from} y1={m.y} x2={lineEnd} y2={m.y} stroke="#000" strokeDasharray={m.dashed ? "3 3" : undefined} />
			<ArrowHead m={m} />
			{m.text !== "prenotato()" && <rect x={m.lx - m.lw / 2} y={m.ly - 6.5} width={m.lw} height={13} fill="#fff" />}
			<DiagramText x={m.lx} y={m.ly}>
				{m.text}
			</DiagramText>
		</g>
	);
}

function SequenceDiagram() {
	return (
		<DiagramSvg viewBox="1017 183 893 611">
			<line x1="1708.5" y1="183" x2="1708.5" y2="794" stroke="#b5b5b5" strokeDasharray="3 3" />
			{ACTORS.map((a) => (
				<g key={a.x}>
					<line x1={a.x + 50} y1="284.5" x2={a.x + 50} y2={a.life} stroke="#000" strokeDasharray="3 3" />
					<rect x={a.x} y="244.5" width="100" height="40" fill="#fff" stroke="#000" />
					{a.lines.map((line, i) => (
						<DiagramText key={line} x={a.x + 49} y={264.5 - ((a.lines.length - 1) * 14) / 2 + i * 14} $size={12}>
							{line}
						</DiagramText>
					))}
				</g>
			))}
			{BARS.map((b) => (
				<rect key={`${b.x}-${b.y}`} x={b.x} y={b.y} width="10" height={b.h} fill={b.fill} stroke="#000" />
			))}

			<rect x="1221.5" y="364.5" width="250" height="110" fill="none" stroke="#000" />
			<path d="M1221.5 364.5h50v16l-10 14h-40z" fill="#fff" stroke="#000" />
			<DiagramText x={1245.5} y={380} $size={12}>
				opt
			</DiagramText>
			<DiagramText x={1371} y={378} $size={12}>
				[nome.in regola=false]
			</DiagramText>

			<rect x="1246.5" y="544.5" width="575" height="150" fill="none" stroke="#000" />
			<path d="M1246.5 544.5h50v16l-10 14h-40z" fill="#fff" stroke="#000" />
			<DiagramText x={1270.5} y={560} $size={12}>
				loop
			</DiagramText>
			<DiagramText x={1396} y={558} $size={12}>
				[date.confermate=false]
			</DiagramText>

			{NOTE_LINES.map((n) => (
				<DiagramText key={n.text} x={n.x} y={n.y} $size={12} $end>
					{n.text}
				</DiagramText>
			))}

			{MESSAGES.map((m) => (
				<MessageArrow key={`${m.text}-${m.y}-${m.from}`} m={m} />
			))}

			<line x1="1266.5" y1="584.5" x2="1388" y2="584.5" stroke="#000" />
			<polygon points="1396,584.5 1388,581 1388,588" fill="#000" />
			<rect x="1269" y="574" width="93" height="28" fill="#fff" />
			<DiagramText x={1316} y={581}>
				chiedi in segreteria
			</DiagramText>
			<DiagramText x={1318} y={594.5}>
				nuove date
			</DiagramText>
		</DiagramSvg>
	);
}

/* ---------- page tabs ---------- */

const PageTabs = styled.div`
	height: 37px;
	flex: none;
	display: flex;
	align-items: stretch;
	border-top: 1px solid #d6d7d9;
	background: #eff0f2;
	color: #555;
	font-size: 12.6px;
`;

const TabMenu = styled.div`
	width: 31px;
	display: flex;
	align-items: center;
	justify-content: center;
	color: #666;
`;

const PageTab = styled.div<{ $active?: boolean; $w: number }>`
	width: ${(p) => p.$w}px;
	display: flex;
	align-items: center;
	justify-content: space-between;
	padding: 0 11px 0 12px;
	background: ${(p) => (p.$active ? "#fff" : "transparent")};
	border-right: 1px solid #d6d7d9;
`;

const AddPage = styled.div`
	width: 32px;
	display: flex;
	align-items: center;
	justify-content: center;
	color: #666;
`;

const TabChevron = styled.span`
	font-size: 10px;
	line-height: 1;
`;

export default function App() {
	return (
		<Page>
			<GlobalStyle />
			<Document />
			<Gutter>
				<GutterHandle />
			</Gutter>
			<Browser>
				<SafariChrome />
				<AppHeader>
					<Logo>
						<DrawioGlyph size={28} />
					</Logo>
					<HeaderCenter>
						<DocTitle>Diagramma senza titolo</DocTitle>
						<MenuRow>
							<span>File</span>
							<span>Modifica</span>
							<span>Visualizza</span>
							<span>Organizza</span>
							<span>Altro</span>
							<span>Aiuto</span>
							<UnsavedBanner>
								Modifiche non salvate. Fai clic qui per salvare.
								<BannerIcon>
									<MdOutlineSaveAlt size={15} />
								</BannerIcon>
							</UnsavedBanner>
						</MenuRow>
					</HeaderCenter>
					<HeaderRight>
						<SunSlot>
							<MdOutlineLightMode size={18} />
						</SunSlot>
						<ShareButton>
							<MdPerson size={20} />
							Condividi
						</ShareButton>
					</HeaderRight>
				</AppHeader>
				<AppToolbar />
				<Body>
					<Palette />
					<Main>
						<CanvasArea>
							<GridPage>
								<SequenceDiagram />
							</GridPage>
							<HScroll />
							<VScroll />
						</CanvasArea>
						<PageTabs>
							<TabMenu>
								<MdMoreVert size={18} />
							</TabMenu>
							<PageTab $active $w={89}>
								Pagina-1
								<TabChevron>^</TabChevron>
							</PageTab>
							<PageTab $w={78}>Pagina-2</PageTab>
							<AddPage>
								<Plus size={18} strokeWidth={1.4} />
							</AddPage>
						</PageTabs>
					</Main>
				</Body>
			</Browser>
		</Page>
	);
}
